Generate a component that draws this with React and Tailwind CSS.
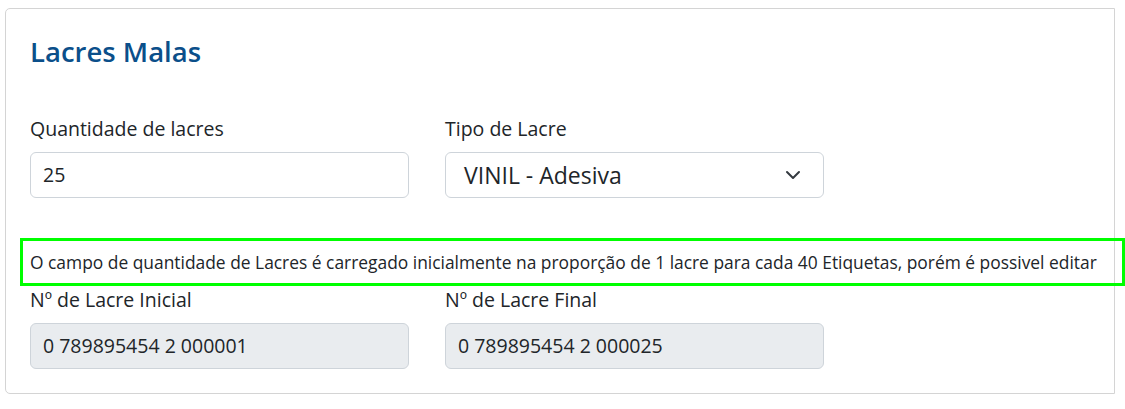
import React from 'react';

const font = { fontFamily: '"Open Sans", "Noto Sans", Arial, sans-serif' };

const Field = ({ label, value, readOnly, select }) => (
  <div className="w-[379px]">
    <div className="text-[19.5px] leading-[27px] text-[#212529] mb-[10px]">{label}</div>
    {select ? (
      <div className="h-[46px] flex items-center justify-between pl-[18px] pr-[22px] border border-[#ced4da] rounded-[6px] bg-white">
        <span className="text-[23px] text-[#212529]">{value}</span>
        <svg width="16" height="16" viewBox="0 0 16 16" fill="none">
          <path d="M2 5l6 6 6-6" stroke="#343a40" strokeWidth="2" strokeLinecap="round" strokeLinejoin="round" />
        </svg>
      </div>
    ) : (
      <div
        className={`h-[46px] flex items-center px-[12px] border border-[#ced4da] rounded-[6px] text-[19.5px] text-[#212529] ${
          readOnly ? 'bg-[#e9ecef]' : 'bg-white'
        }`}
      >
        {value}
      </div>
    )}
  </div>
);

export default function App() {
  return (
    <div className="w-[1125px] h-[409px] bg-white overflow-hidden pt-2 pl-[5px]" style={font}>
      <div className="w-[1110px] border border-[#d4d4d4] rounded-l-[5px] px-6 pt-6 pb-6">
        <h2 className="mt-[3px] text-[27.5px] leading-[32px] font-semibold text-[#0b4f8a]">Lacres Malas</h2>

        <div className="flex gap-[36px] mt-[47px]">
          <Field label="Quantidade de lacres" value="25" />
          <Field label="Tipo de Lacre" value="VINIL - Adesiva" select />
        </div>

        <div className="mt-[40px] -ml-[10px] w-[1105px] h-[48px] border-[3px] border-[#00ff00] flex items-center pl-[7px] text-[17.4px] text-[#212529] whitespace-nowrap">
          O campo de quantidade de Lacres é carregado inicialmente na proporção de 1 lacre para cada 40 Etiquetas, porém é possivel editar
        </div>

        <div className="flex gap-[36px]">
          <Field label="Nº de Lacre Inicial" value="0 789895454 2 000001" readOnly />
          <Field label="Nº de Lacre Final" value="0 789895454 2 000025" readOnly />
        </div>
      </div>
    </div>
  );
}
